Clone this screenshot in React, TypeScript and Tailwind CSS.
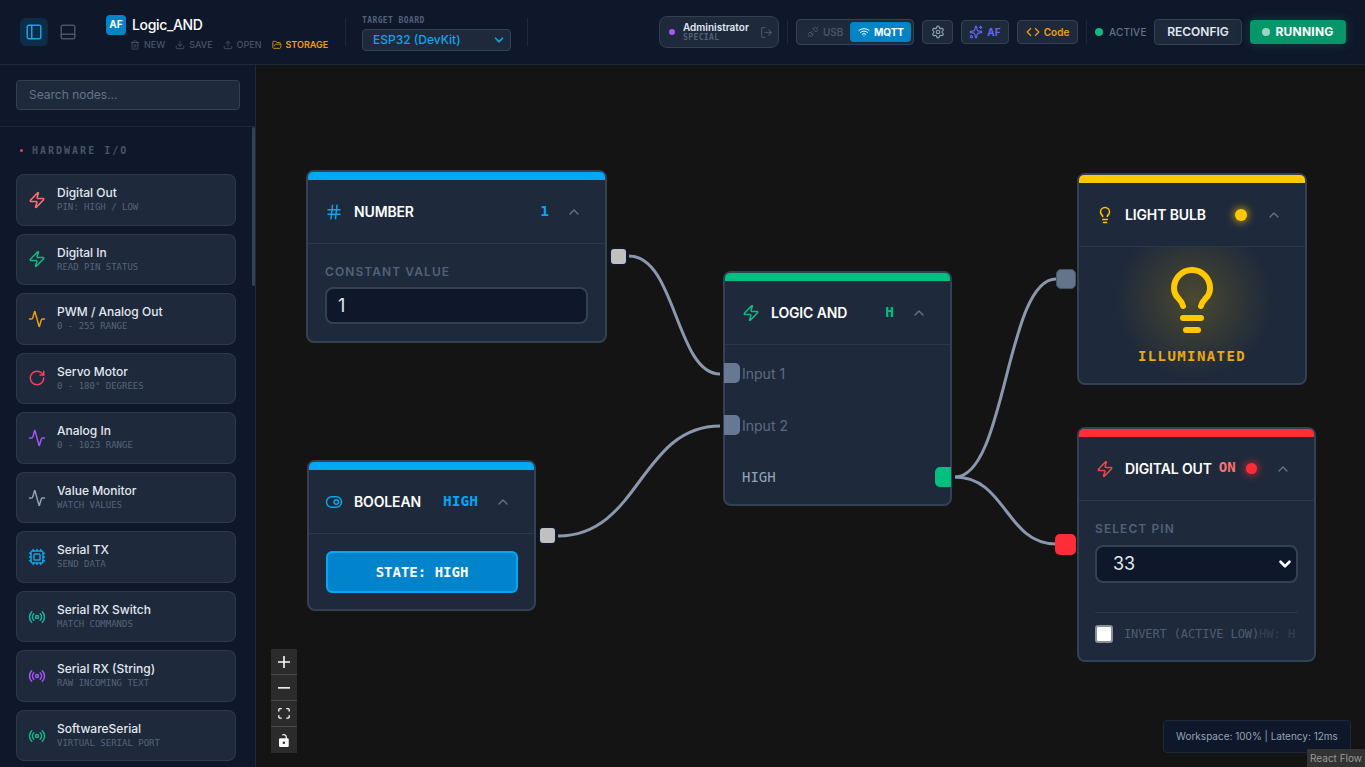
import React from "react";
import {
  Activity, ChevronDown, ChevronUp, Code, Cpu, Download, FolderOpen, Hash, Lightbulb, LogOut,
  PanelBottom, PanelLeft, Radio, RotateCw, Settings, Sparkles, ToggleRight, Trash2, Unplug, Upload, Wifi, Zap,
} from "lucide-react";

const mono = "font-['DejaVu_Sans_Mono',monospace]";

const items = [
  { name: "Digital Out", sub: "PIN: HIGH / LOW", Icon: Zap, color: "text-[#f87171]" },
  { name: "Digital In", sub: "READ PIN STATUS", Icon: Zap, color: "text-[#10b981]" },
  { name: "PWM / Analog Out", sub: "0 - 255 RANGE", Icon: Activity, color: "text-[#f59e0b]" },
  { name: "Servo Motor", sub: "0 - 180° DEGREES", Icon: RotateCw, color: "text-[#f43f5e]" },
  { name: "Analog In", sub: "0 - 1023 RANGE", Icon: Activity, color: "text-[#a855f7]" },
  { name: "Value Monitor", sub: "WATCH VALUES", Icon: Activity, color: "text-[#94a3b8]" },
  { name: "Serial TX", sub: "SEND DATA", Icon: Cpu, color: "text-[#0ea5e9]" },
  { name: "Serial RX Switch", sub: "MATCH COMMANDS", Icon: Radio, color: "text-[#14b8a6]" },
  { name: "Serial RX (String)", sub: "RAW INCOMING TEXT", Icon: Radio, color: "text-[#a855f7]" },
  { name: "SoftwareSerial", sub: "VIRTUAL SERIAL PORT", Icon: Radio, color: "text-[#10b981]" },
];

function Header() {
  return (
    <header className="h-[65px] shrink-0 flex items-center justify-between bg-[#0f172a] border-b border-[#1e293b] pl-5 pr-[19px]">
      <div className="flex items-center">
        <div className="w-7 h-7 rounded-md bg-[#0c2d48] flex items-center justify-center text-[#0ea5e9]">
          <PanelLeft size={18} />
        </div>
        <div className="w-7 h-7 ml-1.5 flex items-center justify-center text-[#475569]">
          <PanelBottom size={18} />
        </div>
        <div className="ml-[24px] w-[240px] pt-[3px]">
          <div className="flex items-center gap-1.5">
            <div className="w-5 h-5 rounded bg-[#0284c7] text-white text-[10px] font-bold flex items-center justify-center">AF</div>
            <span className="text-white text-sm font-medium tracking-tight">Logic_AND</span>
          </div>
          <div className="flex items-center mt-[2px] ml-6 text-[9px] font-medium text-[#475569] h-4">
            <Trash2 size={10} className="mr-1" />NEW
            <Download size={10} className="ml-[10px] mr-1" />SAVE
            <Upload size={10} className="ml-[10px] mr-1" />OPEN
            <span className="flex items-center text-[#f59e0b] font-semibold ml-[10px]">
              <FolderOpen size={10} className="mr-1" />STORAGE
            </span>
          </div>
        </div>
        <div className="w-px h-7 bg-[#1e293b] ml-[-1px]" />
        <div className="ml-4 w-[149px] pt-[3px]">
          <div className={`${mono} text-[8px] leading-[10px] font-bold tracking-[0.05em] text-[#526079] mb-[3px]`}>TARGET BOARD</div>
          <div className="h-[22px] rounded bg-[#1e293b] border border-[#334155] flex items-center justify-between pl-2.5 pr-1 text-xs font-medium text-[#0ea5e9]">
            ESP32 (DevKit)
            <ChevronDown size={14} strokeWidth={3} />
          </div>
        </div>
        <div className="w-px h-7 bg-[#1e293b] ml-4" />
      </div>

      <div className="flex items-center">
        <div className="w-[120px] h-8 rounded-lg bg-[#1e293b] border border-[#334155] flex items-center pl-2">
          <span className="w-[6px] h-[6px] rounded-full bg-[#a855f7] mx-[1px]" />
          <div className="ml-[7px] w-[77px]">
            <div className="text-[10px] leading-[12px] font-semibold text-[#e2e8f0]">Administrator</div>
            <div className={`${mono} text-[8px] leading-[10px] font-bold tracking-[0.05em] text-[#526079]`}>SPECIAL</div>
          </div>
          <LogOut size={13} className="text-[#475569]" />
        </div>
        <div className="w-px h-6 bg-[#1e293b] mx-2" />
        <div className="w-[118px] h-[26px] rounded bg-[#1e293b] border border-[#334155] flex items-center pl-[10px] text-[10px] font-semibold text-[#475569]">
          <Unplug size={12} className="mr-1" />USB
          <div className="ml-[7px] w-[61px] h-5 rounded bg-[#0284c7] text-white font-bold flex items-center justify-center">
            <Wifi size={12} className="mr-1" />MQTT
          </div>
        </div>
        <div className="ml-2 w-[31px] h-6 rounded bg-[#1e293b] border border-[#334155] flex items-center justify-center text-[#94a3b8]">
          <Settings size={14} />
        </div>
        <div className="ml-2 w-[48px] h-6 rounded bg-[#1e293b] border border-[#334155] flex items-center justify-center text-[10px] font-bold text-[#6366f1]">
          <Sparkles size={14} className="mr-1" />AF
        </div>
        <div className="ml-2 w-[61px] h-6 rounded bg-[#1e293b] border border-[#334155] flex items-center justify-center text-[10px] font-semibold text-[#f59e0b]">
          <Code size={14} className="mr-1" />Code
        </div>
        <div className="w-px h-6 bg-[#1e293b] ml-2" />
        <span className="ml-2 w-2 h-2 rounded-full bg-[#10b981]" />
        <span className="ml-1.5 text-[10px] font-medium tracking-[0.02em] text-[#64748b] w-[37px]">ACTIVE</span>
        <div className="ml-2 w-[88px] h-[26px] rounded bg-[#1e293b] border border-[#334155] flex items-center justify-center text-xs font-semibold text-[#e2e8f0]">RECONFIG</div>
        <div className="ml-2 w-[96px] h-6 rounded bg-[#059669] shadow-[0_0_12px_rgba(16,185,129,0.25)] flex items-center justify-center text-xs font-bold tracking-[0.02em] text-white">
          <span className="w-2 h-2 rounded-full bg-white/60 mr-[5px]" />RUNNING
        </div>
      </div>
    </header>
  );
}

function Sidebar() {
  return (
    <aside className="w-[256px] shrink-0 bg-[#0f172a] border-r border-[#1e293b] flex flex-col overflow-hidden">
      <div className="pl-4 pr-[15px] pt-[15px] pb-4 border-b border-[#1e293b]">
        <div className="h-[30px] rounded bg-[#1e293b] border border-[#334155] flex items-center px-3 text-xs text-[#64748b]">Search nodes...</div>
      </div>
      <div className="relative flex-1 overflow-hidden pl-4 pr-[19px]">
        <div className="absolute right-0 top-0 w-[3px] h-[159px] bg-[#334155] rounded-full" />
        <div className="flex items-center h-[47px] pl-[4px]">
          <span className="w-[3px] h-[3px] rounded-full bg-[#ef4444]" />
          <span className={`${mono} ml-[9px] text-[10px] font-bold tracking-[0.2em] text-[#475569]`}>HARDWARE I/O</span>
        </div>
        <div className="flex flex-col gap-2">
          {items.map((it) => (
            <div key={it.name} className="h-[51.55px] shrink-0 rounded-lg bg-[#1e293b] border border-[#334155]/70 flex items-center pl-[11px]">
              <it.Icon size={18} className={it.color} />
              <div className="ml-[11px] mb-[1.5px]">
                <div className="text-xs leading-4 font-medium text-[#e2e8f0]">{it.name}</div>
                <div className={`${mono} text-[9px] leading-3 text-[#55647c]`}>{it.sub}</div>
              </div>
            </div>
          ))}
        </div>
      </div>
    </aside>
  );
}

function NodeHead({ bar, icon, title, right }: { bar: string; icon: React.ReactNode; title: string; right: React.ReactNode }) {
  return (
    <>
      <div className={`h-2 rounded-t-[5px] ${bar}`} />
      <div className="h-[64px] border-b border-[#334155]/60 flex items-center">
        {icon}
        <span className="text-sm font-semibold text-white ml-[11px] tracking-[-0.01em] whitespace-nowrap">{title}</span>
        {right}
        <ChevronUp size={16} className="text-[#64748b] shrink-0 mr-[23px]" />
      </div>
    </>
  );
}

function RfButton({ children, last }: { children: React.ReactNode; last?: boolean }) {
  return (
    <div className={`h-[26px] bg-[#2b2b2b] flex items-center justify-center ${last ? "" : "border-b border-[#4a4a4a]"}`}>
      {children}
    </div>
  );
}

function Canvas() {
  const node = "absolute bg-[#1e293b] border-2 border-[#334155] rounded-lg";
  const value = `${mono} ml-auto mr-[17px] text-[14.5px] font-bold`;
  return (
    <main className="relative flex-1 bg-[#141414] overflow-hidden">
      {/* edges */}
      <svg className="absolute inset-0 w-full h-full" fill="none" stroke="#8a98ae" strokeWidth="3">
        <path d="M373 191 C 420 191, 420 309, 464 309" />
        <path d="M302 471 C 384 471, 384 361, 464 361" />
        <path d="M699 412 C 750 412, 750 214, 800 214" />
        <path d="M699 412 C 750 412, 750 479, 800 479" />
      </svg>

      {/* number */}
      <div className={`${node} left-[50px] top-[105px] w-[301px] h-[173px]`}>
        <NodeHead
          bar="bg-[#00a8f5]"
          title="NUMBER"
          icon={<Hash size={18} className="text-[#0ea5e9] ml-[17px]" />}
          right={<span className={`${value} text-[#00a8f5]`}>1</span>}
        />
        <div className="px-[17px]">
          <div className="mt-[20px] text-xs font-semibold tracking-[0.09em] text-[#52617a]">CONSTANT VALUE</div>
          <div className="mt-[7px] h-[37px] rounded-lg bg-[#0f172a] border-2 border-[#334155] flex items-center pl-[11px] text-lg text-[#e2e8f0]">1</div>
        </div>
      </div>
      <div className="absolute left-[355px] top-[184px] w-[15px] h-[15px] rounded-[3px] bg-[#c0c0c0] shadow-[0_0_0_2px_#0f172a]" />

      {/* boolean */}
      <div className={`${node} left-[51px] top-[395px] w-[229px] h-[151px]`}>
        <NodeHead
          bar="bg-[#00a8f5]"
          title="BOOLEAN"
          icon={<ToggleRight size={18} className="text-[#0ea5e9] ml-[16px]" />}
          right={<span className={`${value} text-[#00a8f5]`}>HIGH</span>}
        />
        <div className={`${mono} ml-[17px] mr-4 mt-[17px] h-[42px] rounded-md bg-[#0284cc] border-2 border-[#00a8f5] flex items-center justify-center text-sm font-bold text-white`}>STATE: HIGH</div>
      </div>
      <div className="absolute left-[284px] top-[463px] w-[15px] h-[15px] rounded-[3px] bg-[#c0c0c0] shadow-[0_0_0_2px_#0f172a]" />

      {/* logic and */}
      <div className={`${node} left-[467px] top-[206px] w-[229px] h-[235px]`}>
        <NodeHead
          bar="bg-[#00c07f]"
          title="LOGIC AND"
          icon={<Zap size={18} className="text-[#10b981] ml-[17px]" />}
          right={<span className={`${value} text-[#00c07f]`}>H</span>}
        />
        <div className="flex flex-col pl-[17px] pt-[3px]">
          <div className="h-[52px] flex items-center text-sm text-[#5d6b84]">Input 1</div>
          <div className="h-[51px] flex items-center text-sm text-[#5d6b84]">Input 2</div>
          <div className={`${mono} h-[52px] flex items-center text-sm text-[#94a3b8]`}>HIGH</div>
        </div>
      </div>
      <div className="absolute left-[468px] top-[298px] w-4 h-5 rounded-r-[5px] bg-[#667892]" />
      <div className="absolute left-[468px] top-[350px] w-4 h-5 rounded-r-[5px] bg-[#667892]" />
      <div className="absolute left-[679px] top-[402px] w-4 h-5 rounded-l-[5px] bg-[#00c07f]" />

      {/* light bulb */}
      <div className={`${node} left-[821px] top-[108px] w-[230px] h-[212px]`}>
        <NodeHead
          bar="bg-[#ffc800]"
          title="LIGHT BULB"
          icon={<Lightbulb size={18} className="text-[#ffc800] ml-[17px]" />}
          right={<span className="ml-auto mr-[19px] w-3 h-3 rounded-full bg-[#ffc800] shadow-[0_0_10px_#ffc800]" />}
        />
        <div className="relative flex flex-col items-center overflow-hidden h-[138px]">
          <div className="absolute left-[30px] top-[-32px] w-[170px] h-[170px] rounded-full bg-[radial-gradient(circle,rgba(255,200,0,0.2),transparent_65%)]" />
          <Lightbulb size={72} strokeWidth={2} className="relative mt-[17px] text-[#ffc800] shrink-0" />
          <div className={`${mono} relative mt-[10px] text-sm leading-5 font-bold tracking-[0.1em] text-[#eaa914]`}>ILLUMINATED</div>
        </div>
      </div>
      <div className="absolute left-[800px] top-[204px] w-5 h-5 rounded-[5px] bg-[#64748b] border border-[#475569]" />

      {/* digital out */}
      <div className={`${node} left-[821px] top-[362px] w-[239px] h-[235px]`}>
        <NodeHead
          bar="bg-[#ff2d37]"
          title="DIGITAL OUT"
          icon={<Zap size={18} className="text-[#ef4444] ml-[17px]" />}
          right={
            <>
              <span className={`${mono} ml-[7px] mb-[4px] text-sm font-bold text-[#f87171]`}>ON</span>
              <span className="ml-[10px] mr-[18px] w-[11px] h-[11px] rounded-full bg-[#ff2d37] shadow-[0_0_10px_#ff2d37]" />
            </>
          }
        />
        <div className="px-[16px]">
          <div className="mt-[20px] text-xs font-semibold tracking-[0.09em] text-[#52617a]">SELECT PIN</div>
          <div className="mt-[8px] h-[38px] rounded-lg bg-[#0f172a] border-2 border-[#334155] flex items-center justify-between pl-4 pr-[2px] text-lg text-[#e2e8f0]">
            33
            <ChevronDown size={18} strokeWidth={3.5} className="text-white" />
          </div>
          <div className="mt-[29px] border-t border-[#334155]/60 pt-[12px] flex items-center">
            <div className="w-[18px] h-[18px] shrink-0 rounded-[3px] bg-white border-2 border-[#8a8f98]" />
            <span className={`${mono} ml-[11px] text-xs tracking-[-0.01em] text-[#4e5d75] whitespace-nowrap`}>INVERT (ACTIVE LOW)</span>
            <span className={`${mono} text-xs text-[#334155] whitespace-pre overflow-hidden w-[38px]`}>HW: H</span>
          </div>
        </div>
      </div>
      <div className="absolute left-[799px] top-[469px] w-[21px] h-[21px] rounded-[5px] bg-[#ff2d37]" />

      {/* react flow controls */}
      <div className="absolute left-[15px] top-[584px] w-[26px] flex flex-col">
        <RfButton>
          <svg width="12" height="12" viewBox="0 0 32 32" fill="#f8f8f8"><path d="M32 18.133H18.133V32h-4.266V18.133H0v-4.266h13.867V0h4.266v13.867H32z" /></svg>
        </RfButton>
        <RfButton>
          <svg width="12" height="2" viewBox="0 0 32 5" fill="#f8f8f8"><path d="M0 0h32v4.200H0z" /></svg>
        </RfButton>
        <RfButton>
          <svg width="12" height="11" viewBox="0 0 32 30" fill="#f8f8f8"><path d="M3.692 4.630c0-.530.400-.938.939-.938h5.215V0H4.708C2.130 0 0 2.054 0 4.630v5.216h3.692V4.631zM27.354 0h-5.200v3.692h5.170c.530 0 .984.400.984.939v5.215H32V4.631A4.624 4.624 0 0027.354 0zm.954 24.830c0 .532-.400.940-.939.940h-5.215v3.768h5.215c2.577 0 4.631-2.130 4.631-4.707v-5.139h-3.692v5.139zm-23.677.940c-.531 0-.939-.400-.939-.940v-5.138H0v5.139c0 2.577 2.130 4.707 4.708 4.707h5.138V25.770H4.631z" /></svg>
        </RfButton>
        <RfButton last>
          <svg width="10" height="13" viewBox="0 0 25 32" fill="#f8f8f8"><path d="M21.333 10.667H19.810V7.619C19.810 3.429 16.380 0 12.190 0 10.300 0 8.600.600 7.300 1.700L9.300 4C10.100 3.400 11.100 3.050 12.190 3.050c2.477 0 4.572 2.133 4.572 4.571v3.046H3.048A3.056 3.056 0 000 13.714v15.238A3.056 3.056 0 003.048 32h18.285a3.056 3.056 0 003.048-3.048V13.714a3.056 3.056 0 00-3.048-3.047zM12.190 24.533a3.056 3.056 0 01-3.047-3.047 3.056 3.056 0 013.047-3.048 3.056 3.056 0 013.048 3.048 3.056 3.056 0 01-3.048 3.047z" /></svg>
        </RfButton>
      </div>

      {/* status */}
      <div className="absolute right-[14px] bottom-[14px] h-[33px] w-[188px] rounded bg-[#0f172a] border border-[#1e293b] flex items-center justify-center text-[10px] text-[#94a3b8] whitespace-pre">
        Workspace: 100% | Latency: 12ms
      </div>
      <div className="absolute right-0 bottom-0 h-[18px] px-[3px] bg-[#333333] flex items-center text-[10px] text-[#999999]">React Flow</div>
    </main>
  );
}

export default function App() {
  return (
    <div className="h-screen w-full flex flex-col overflow-hidden font-['Inter',sans-serif]">
      <Header />
      <div className="flex flex-1 min-h-0">
        <Sidebar />
        <Canvas />
      </div>
    </div>
  );
}
